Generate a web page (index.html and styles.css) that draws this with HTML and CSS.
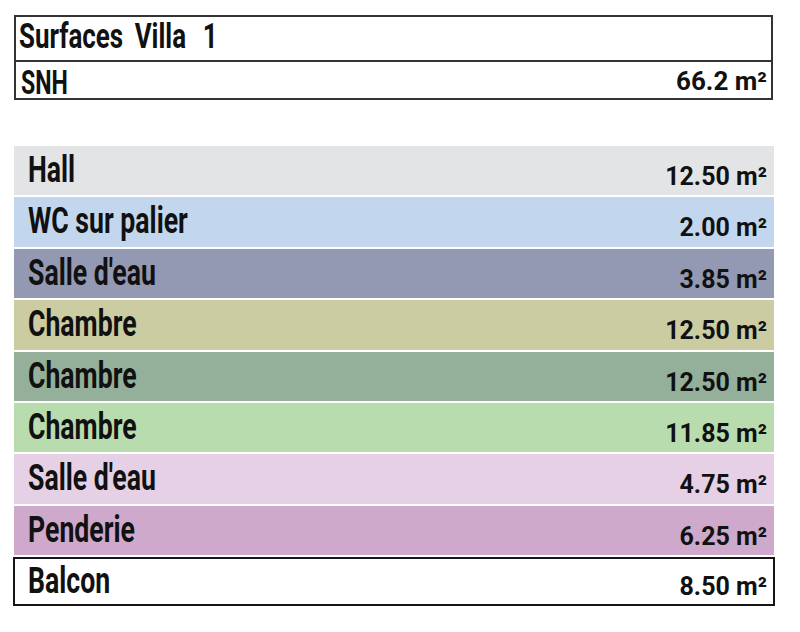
FILE: index.html
```html
<!DOCTYPE html>
<html lang="fr">
<head>
<meta charset="utf-8">
<title>Surfaces Villa 1</title>
<link rel="stylesheet" href="styles.css">
</head>
<body>
<div class="page">
  <div class="summary">
    <div class="title-row"><span class="cond title">Surfaces Villa <span class="num">1</span></span></div>
    <div class="snh-row">
      <span class="cond snh">SNH</span>
      <span class="val snh-val">66.2 m²</span>
    </div>
  </div>
  <div class="rooms">
    <div class="room hall"><span class="cond label">Hall</span><span class="val">12.50 m²</span></div>
    <div class="room wc"><span class="cond label">WC sur palier</span><span class="val">2.00 m²</span></div>
    <div class="room sde1"><span class="cond label">Salle d'eau</span><span class="val">3.85 m²</span></div>
    <div class="room ch1"><span class="cond label">Chambre</span><span class="val">12.50 m²</span></div>
    <div class="room ch2"><span class="cond label">Chambre</span><span class="val">12.50 m²</span></div>
    <div class="room ch3"><span class="cond label">Chambre</span><span class="val">11.85 m²</span></div>
    <div class="room sde2"><span class="cond label">Salle d'eau</span><span class="val">4.75 m²</span></div>
    <div class="room pend"><span class="cond label">Penderie</span><span class="val">6.25 m²</span></div>
    <div class="room balcon"><span class="cond label">Balcon</span><span class="val">8.50 m²</span></div>
  </div>
</div>
</body>
</html>
```
FILE: styles.css
```css
html, body {
  margin: 0;
  padding: 0;
  background: #ffffff;
}
body {
  font-family: Roboto, "Liberation Sans", Arial, sans-serif;
  color: #111111;
}
.page {
  padding: 15px 0 0 14px;
  width: 760px;
}
.cond {
  display: inline-block;
  font-weight: 700;
  font-size: 36px;
  line-height: 36px;
  transform: scaleX(0.74);
  transform-origin: left center;
  white-space: nowrap;
}
.val {
  font-weight: 700;
  font-size: 25px;
  line-height: 25px;
  white-space: nowrap;
  padding-top: 18px;
}
.summary {
  width: 755px;
  border: 2px solid #333333;
}
.title-row {
  box-sizing: border-box;
  height: 45px;
  border-bottom: 2px solid #333333;
  padding: 2px 0 0 3px;
}
.title {
  font-size: 35px;
  line-height: 35px;
  word-spacing: 7px;
}
.title .num {
  margin-left: 7px;
}
.snh-row {
  box-sizing: border-box;
  height: 36px;
  display: flex;
  justify-content: space-between;
  align-items: flex-start;
  padding: 0 4px 0 5px;
}
.snh {
  font-size: 34px;
  line-height: 34px;
  transform: scaleX(0.68);
  padding-top: 3px;
}
.snh-val {
  font-size: 26px;
  line-height: 26px;
  padding-top: 6px;
}
.rooms {
  margin-top: 46px;
  display: flex;
  flex-direction: column;
  gap: 2px;
}
.room {
  height: 49.375px;
  box-sizing: border-box;
  display: flex;
  justify-content: space-between;
  align-items: flex-start;
  padding: 0 7px 0 14px;
}
.room .label {
  padding-top: 6px;
}
.hall { background: #e3e4e6; }
.wc { background: #c2d7ee; }
.sde1 { background: #9399b3; }
.ch1 { background: #cccca3; }
.ch2 { background: #94b09a; }
.ch3 { background: #b9dcaf; }
.sde2 { background: #e5d0e5; }
.pend { background: #cea9cc; }
.balcon {
  background: #ffffff;
  border: 2px solid #151515;
  margin: 0 -1px;
  padding: 0 6px 0 13px;
  height: 49px;
}
.balcon .label {
  padding-top: 4px;
}
.balcon .val {
  padding-top: 15px;
}
```
